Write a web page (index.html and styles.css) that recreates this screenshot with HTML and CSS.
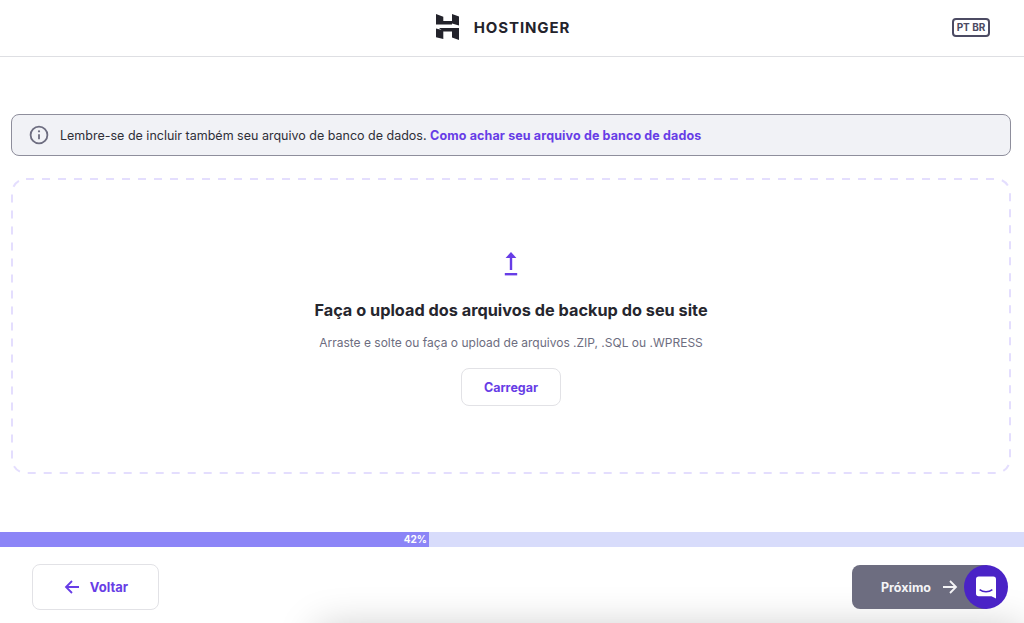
FILE: index.html
```html
<!DOCTYPE html>
<html lang="pt-BR">
    <head>
        <meta charset="UTF-8">
        <meta name="viewport" content="width=device-width, initial-scale=1.0">
        <title>Hostinger - Migração</title>
        <link rel="stylesheet" href="styles.css">
    </head>
    <body>
        <header class="topbar">
            <div class="logo">
                <svg class="logo-mark" viewBox="0 0 23 26" width="23" height="26">
                    <path d="M0 0L7.3 2.7V7H16V10.6H0Z"/>
                    <path d="M16 0L23 2.5V11.6L16 9.6Z"/>
                    <path d="M0 14.5L7.3 16.2V25L0 23.2Z"/>
                    <path d="M3 14H23V26L16 23.4V17.6H7.3Z"/>
                </svg>
                <span class="logo-text">HOSTINGER</span>
            </div>
            <div class="lang">PT BR</div>
        </header>

        <main class="content">
            <div class="notice">
                <svg class="notice-icon" viewBox="0 0 20 20" width="20" height="20">
                    <circle cx="10" cy="10" r="8.4"/>
                    <path d="M10 9.2V14.2"/>
                    <circle class="dot" cx="10" cy="6.3" r="1.1"/>
                </svg>
                <p>Lembre-se de incluir também seu arquivo de banco de dados. <a href="#">Como achar seu arquivo de banco de dados</a></p>
            </div>

            <section class="dropzone">
                <svg class="dashes" viewBox="0 0 1000 296" width="1000" height="296">
                    <rect x="1" y="1" width="998" height="294" rx="14"/>
                </svg>
                <svg class="upload-icon" viewBox="0 0 14 26" width="14" height="26">
                    <path d="M7 1L12.4 7H8.2V19H5.8V7H1.6Z"/>
                    <path d="M.8 22H13.2V24.4H.8Z"/>
                </svg>
                <h2>Faça o upload dos arquivos de backup do seu site</h2>
                <p>Arraste e solte ou faça o upload de arquivos .ZIP, .SQL ou .WPRESS</p>
                <button class="btn btn-upload">Carregar</button>
            </section>
        </main>

        <div class="progress">
            <div class="progress-fill">42%</div>
        </div>

        <footer class="actions">
            <button class="btn btn-back">
                <svg viewBox="0 0 16 16" width="16" height="16">
                    <path d="M15 8H2M8 2L2 8L8 14"/>
                </svg>
                Voltar
            </button>
            <button class="btn btn-next">
                Próximo
                <svg viewBox="0 0 16 16" width="16" height="16">
                    <path d="M1 8H14M8 2L14 8L8 14"/>
                </svg>
            </button>
        </footer>

        <div class="chat-glow">
            <div class="chat-glow-shape"></div>
        </div>
        <div class="chat-bubble">
            <svg viewBox="0 0 22 24" width="20" height="23">
                <path class="chat-body" d="M3 0H19A3 3 0 0 1 22 3V24L17 21.6H3A3 3 0 0 1 0 18.6V3A3 3 0 0 1 3 0Z"/>
                <path class="chat-smile" d="M4 14.4C8 17.4 14 17.4 18 14.4"/>
            </svg>
        </div>
    </body>
</html>
```

FILE: styles.css
```css
html, body {
    height: 100%;
    overflow: hidden;
}

body {
    margin: 0;
    background-color: #fff;
    color: #2f1c6a;
    font-family: "Inter", "Liberation Sans", sans-serif;
    position: relative;
}

/* Header */
.topbar {
    height: 56px;
    border-bottom: 1px solid #dedfe3;
    display: flex;
    align-items: center;
    justify-content: center;
    box-sizing: content-box;
    position: relative;
}

.logo {
    display: flex;
    align-items: center;
    gap: 15px;
    margin-top: -2px;
    margin-right: 18px;
}

.logo-mark path {
    fill: #23232b;
}

.logo-text {
    font-size: 15px;
    font-weight: 700;
    letter-spacing: .9px;
    color: #23232b;
}

.lang {
    position: absolute;
    left: 952px;
    top: 18px;
    width: 34px;
    height: 15px;
    border: 2px solid #4c4b63;
    border-radius: 4px;
    font-size: 10px;
    font-weight: 700;
    line-height: 15px;
    text-align: center;
    color: #4c4b63;
}

/* Main */
.content {
    padding: 57px 13px 0 11px;
}

.notice {
    height: 40px;
    display: flex;
    align-items: center;
    gap: 11px;
    padding-left: 17px;
    background-color: #f1f2f6;
    border: 1px solid #8e8e9c;
    border-radius: 8px;
}

.notice-icon circle,
.notice-icon path {
    fill: none;
    stroke: #6d6d80;
    stroke-width: 1.8;
}

.notice-icon .dot {
    fill: #6d6d80;
    stroke: none;
}

.notice p {
    margin: 0;
    font-size: 12.5px;
    color: #2f2f38;
}

.notice a {
    color: #673de6;
    font-weight: 700;
    letter-spacing: .13px;
    text-decoration: none;
}

.dropzone {
    margin-top: 22px;
    height: 296px;
    display: flex;
    flex-direction: column;
    align-items: center;
    position: relative;
}

.dashes {
    position: absolute;
    left: 0;
    top: 0;
}

.dashes rect {
    fill: none;
    stroke: #e4defe;
    stroke-width: 2;
    stroke-dasharray: 8 8;
}

.upload-icon {
    margin-top: 73px;
}

.upload-icon path {
    fill: #673de6;
}

.dropzone h2 {
    margin: 22px 0 0;
    font-size: 16.3px;
    font-weight: 700;
    line-height: 22px;
    color: #26262e;
}

.dropzone p {
    margin: 13px 0 0;
    font-size: 12px;
    line-height: 18px;
    color: #6d6d80;
}

/* Buttons */
.btn {
    font-family: inherit;
    font-size: 12.5px;
    font-weight: 700;
    border-radius: 8px;
    background-color: #fff;
    border: 1px solid #e2e2e6;
    color: #673de6;
    display: flex;
    align-items: center;
    justify-content: center;
    box-sizing: border-box;
}

.btn svg path {
    fill: none;
    stroke: currentColor;
    stroke-width: 1.8;
}

.btn-upload {
    margin-top: 16px;
    width: 100px;
    height: 38px;
}

/* Progress */
.progress {
    position: absolute;
    left: 0;
    right: 0;
    top: 532px;
    height: 15px;
    background-color: #d8dcfb;
}

.progress-fill {
    width: 429px;
    height: 100%;
    box-sizing: border-box;
    padding-right: 2px;
    background-color: #8c85f7;
    color: #fff;
    font-size: 10px;
    font-weight: 700;
    line-height: 15px;
    text-align: right;
}

/* Footer */
.actions {
    position: absolute;
    left: 32px;
    right: 32px;
    top: 564px;
    display: flex;
    justify-content: space-between;
}

.btn-back {
    width: 127px;
    height: 46px;
    gap: 10px;
    padding-left: 7px;
    font-size: 13px;
}

.btn-next {
    width: 140px;
    height: 44px;
    margin-top: 1px;
    gap: 11px;
    background-color: #6d6d80;
    border: none;
    color: #f4f4f6;
    padding-right: 11px;
    position: relative;
    z-index: 2;
}

/* Chat widget */
.chat-glow {
    position: absolute;
    left: 250px;
    right: 0;
    top: 583px;
    height: 40px;
    overflow: hidden;
}

.chat-glow-shape {
    position: absolute;
    left: 80px;
    top: 57px;
    width: 680px;
    height: 60px;
    box-shadow: 0 0 40px 12px rgba(0, 0, 0, .22);
    background-color: #ccc;
}

.chat-bubble {
    position: absolute;
    left: 964px;
    top: 565px;
    width: 44px;
    height: 44px;
    border-radius: 50%;
    background-color: #4a23c6;
    display: flex;
    align-items: center;
    justify-content: center;
    z-index: 3;
}

.chat-body {
    fill: #fff;
}

.chat-smile {
    fill: none;
    stroke: #4a23c6;
    stroke-width: 1.6;
}
```
